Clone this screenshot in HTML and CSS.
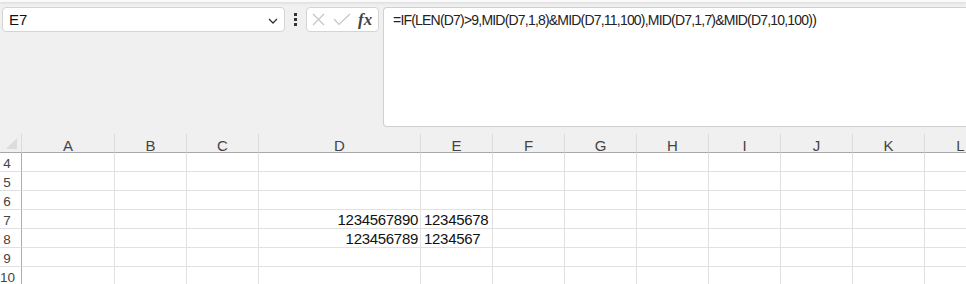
FILE: index.html
```html
<!DOCTYPE html>
<html lang="en">
<head>
  <meta charset="UTF-8">
  <title>Sheet</title>
  <link rel="stylesheet" href="styles.css">
</head>
<body>
  <div class="top-strip"></div>

  <div class="formula-bar">
    <div class="name-box">
      <span class="name-text">E7</span>
      <svg class="chevron" width="10" height="6" viewBox="0 0 10 6"><path d="M1 1 L5 5 L9 1" fill="none" stroke="#333" stroke-width="1.3"/></svg>
    </div>
    <div class="dots"><span></span><span></span><span></span></div>
    <div class="fx-box">
      <svg width="13" height="13" viewBox="0 0 13 13"><path d="M1 1 L12 12 M12 1 L1 12" stroke="#c6c6c6" stroke-width="1.2"/></svg>
      <svg width="18" height="13" viewBox="0 0 18 13"><path d="M1 6 L6 11.5 L17 1" fill="none" stroke="#c6c6c6" stroke-width="1.2"/></svg>
      <span class="fx">fx</span>
    </div>
    <div class="formula-box">=IF(LEN(D7)&gt;9,MID(D7,1,8)&amp;MID(D7,11,100),MID(D7,1,7)&amp;MID(D7,10,100))</div>
  </div>

  <div class="sheet" id="sheet">
    <div class="hdr corner"><span class="tri"></span></div>
  </div>

  <script>
    const cols = ['A', 'B', 'C', 'D', 'E', 'F', 'G', 'H', 'I', 'J', 'K', 'L'];
    const data = {
      'D7': { v: '1234567890', right: true },
      'E7': { v: '12345678' },
      'D8': { v: '123456789', right: true },
      'E8': { v: '1234567' }
    };
    const sheet = document.getElementById('sheet');

    cols.forEach(c => {
      const h = document.createElement('div');
      h.className = 'hdr col';
      h.textContent = c;
      sheet.appendChild(h);
    });

    for (let r = 4; r <= 10; r++) {
      const rh = document.createElement('div');
      rh.className = 'rownum';
      rh.textContent = r;
      sheet.appendChild(rh);
      cols.forEach(c => {
        const cell = document.createElement('div');
        cell.className = 'cell';
        const d = data[c + r];
        if (d) {
          cell.textContent = d.v;
          if (d.right) cell.classList.add('num');
        }
        sheet.appendChild(cell);
      });
    }
  </script>
</body>
</html>
```

FILE: styles.css
```css
body {
  margin: 0;
  background-color: #f0f0f0;
  font-family: "Liberation Sans", Arial, sans-serif;
  color: #222;
  overflow: hidden;
}
.top-strip {
  height: 2px;
  background: #fafafa;
  box-shadow: 0 1px 3px rgba(0, 0, 0, 0.12);
}
.formula-bar {
  display: flex;
  align-items: flex-start;
  padding: 5px 0 0 2px;
  height: 121px;
}
.name-box {
  box-sizing: border-box;
  width: 283px;
  height: 25px;
  background: #fff;
  border: 1px solid #d4d4d4;
  border-radius: 4px;
  display: flex;
  align-items: center;
  justify-content: space-between;
  padding: 0 6px 0 6px;
}
.name-text {
  font-size: 15px;
  color: #111;
}
.chevron {
  margin-top: 2px;
}
.dots {
  width: 21px;
  height: 25px;
  display: flex;
  flex-direction: column;
  align-items: center;
  justify-content: center;
  gap: 2px;
}
.dots span {
  width: 3px;
  height: 3px;
  background: #333;
}
.fx-box {
  box-sizing: border-box;
  width: 73px;
  height: 25px;
  background: #fff;
  border: 1px solid #d4d4d4;
  border-radius: 4px;
  display: flex;
  align-items: center;
  gap: 8px;
  padding-left: 5px;
}
.fx {
  font-family: "Liberation Serif", "Times New Roman", serif;
  font-style: italic;
  font-weight: bold;
  font-size: 17px;
  color: #444;
  margin-left: -1px;
}
.formula-box {
  box-sizing: border-box;
  flex: 1;
  height: 120px;
  margin-left: 4px;
  background: #fff;
  border: 1px solid #d0d0d0;
  border-right: none;
  border-radius: 4px 0 0 4px;
  padding: 4px 0 0 9px;
  font-size: 14px;
  letter-spacing: -0.8px;
  color: #222;
}
.sheet {
  margin-top: 5px;
  display: grid;
  grid-template-columns: 22px 93px 72px 72px 162px repeat(7, 72px) 72px;
  grid-auto-rows: 19px;
  grid-template-rows: 20px;
  width: max-content;
  background: #fff;
}
.hdr {
  background: #f0f0f0;
  border-bottom: 1px solid #a8a8a8;
  box-sizing: border-box;
}
.corner {
  border-right: 1px solid #dcdcdc;
  position: relative;
}
.tri {
  position: absolute;
  right: 4px;
  bottom: 3px;
  width: 0;
  height: 0;
  border-left: 11px solid transparent;
  border-bottom: 11px solid #dcdcdc;
}
.col {
  border-right: 1px solid #dcdcdc;
  font-size: 15px;
  color: #444;
  text-align: center;
  line-height: 22px;
  border-top: 2px solid #f0f0f0;
}
.rownum {
  box-sizing: border-box;
  border-right: 1px solid #acacac;
  border-bottom: 1px solid #e1e1e1;
  background: #fff;
  font-size: 13.5px;
  color: #444;
  width: 22px;
  padding-right: 7px;
  text-align: center;
  line-height: 22px;
  overflow: visible;
  white-space: nowrap;
}
.cell {
  box-sizing: border-box;
  border-right: 1px solid #e1e1e1;
  border-bottom: 1px solid #e1e1e1;
  font-size: 15px;
  letter-spacing: -0.3px;
  color: #111;
  line-height: 20px;
  padding: 0 2px 0 3px;
  white-space: nowrap;
  overflow: hidden;
}
.num {
  text-align: right;
}
```
